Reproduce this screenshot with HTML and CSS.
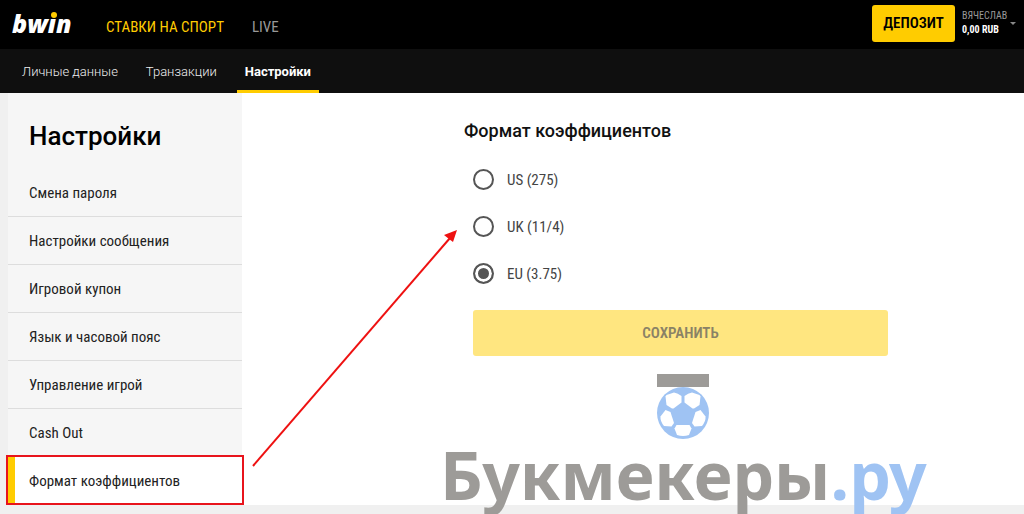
FILE: index.html
```html
<!DOCTYPE html>
<html lang="ru">
<head>
    <meta charset="UTF-8">
    <meta name="viewport" content="width=device-width, initial-scale=1.0">
    <title>Настройки</title>
    <link rel="stylesheet" href="styles.css">
</head>
<body>
    <header class="topbar">
        <a href="#" class="logo" aria-label="bwin">bw<span class="logo-i">ı</span>n</a>
        <nav class="main-nav">
            <a href="#" class="active">СТАВКИ НА СПОРТ</a>
            <a href="#">LIVE</a>
        </nav>
        <button type="button" class="deposit">ДЕПОЗИТ</button>
        <button type="button" class="account">
            <span class="account-text">
                <span class="account-name">ВЯЧЕСЛАВ</span>
                <span class="account-balance">0,00 RUB</span>
            </span>
            <span class="caret"></span>
        </button>
    </header>

    <nav class="subnav">
        <a href="#">Личные данные</a>
        <a href="#">Транзакции</a>
        <a href="#" class="active">Настройки</a>
    </nav>

    <div class="page">
        <aside class="sidebar">
            <h1>Настройки</h1>
            <ul class="menu">
                <li><a href="#">Смена пароля</a></li>
                <li><a href="#">Настройки сообщения</a></li>
                <li><a href="#">Игровой купон</a></li>
                <li><a href="#">Язык и часовой пояс</a></li>
                <li><a href="#">Управление игрой</a></li>
                <li><a href="#">Cash Out</a></li>
                <li><a href="#" class="active">Формат коэффициентов</a></li>
            </ul>
        </aside>

        <main class="content">
            <form class="odds-form">
                <h2>Формат коэффициентов</h2>
                <label class="option"><input type="radio" name="odds" value="us">US (275)</label>
                <label class="option"><input type="radio" name="odds" value="uk">UK (11/4)</label>
                <label class="option"><input type="radio" name="odds" value="eu" checked>EU (3.75)</label>
                <button type="submit" class="save" disabled>СОХРАНИТЬ</button>
            </form>

            <svg class="arrow" width="206" height="238" viewBox="0 0 206 238" aria-hidden="true">
                <path d="M1 236 L198 8" stroke="#ee1111" stroke-width="2" fill="none"/>
                <path d="M205 0 L201 12 L197 9 L192 5 Z" fill="#ee1111"/>
            </svg>

            <div class="watermark">
                <svg width="54" height="66" viewBox="0 0 54 66" aria-hidden="true">
                    <rect x="1" y="0" width="52" height="13" fill="#9d9b98"/>
                    <circle cx="27" cy="39" r="26" fill="#9fc3f3"/>
                    <g fill="#ffffff">
                        <path d="M9.500 22.500 L10.500 21 L18 18.500 Q22 19 25.500 22 L25.500 28.500 L17.500 34.500 L16 34.500 L10.500 31 Z"/>
                        <path d="M44.500 22.500 L43.500 21 L36 18.500 Q32 19 28.500 22 L28.500 28.500 L36.500 34.500 L38 34.500 L43.500 31 Z"/>
                        <path d="M9.500 36 L14.500 38 L18 49 L15.500 52.500 L8 52 Q4 47 4.500 42.500 Z"/>
                        <path d="M44.500 36 L39.500 38 L36 49 L38.500 52.500 L46 52 Q50 47 49.500 42.500 Z"/>
                        <path d="M20.500 51 L33.500 51 L35.500 54.500 L33 61 Q27 63 21 61 L18.500 54.500 Z"/>
                    </g>
                </svg>
                <div class="watermark-text">Букмекеры<span>.ру</span></div>
            </div>
        </main>
    </div>
</body>
</html>
```
FILE: styles.css
```css
* {
    box-sizing: border-box;
}

body {
    min-height: 100vh;
    margin: 0;
    background-color: #f0f0f0;
    font-family: "Roboto Condensed", Roboto, sans-serif;
    color: #222;
}

a {
    color: inherit;
    text-decoration: none;
}

button {
    border: none;
    font-family: inherit;
    cursor: pointer;
}

.topbar {
    display: flex;
    align-items: center;
    height: 49px;
    padding: 0 8px 3px 12px;
    background-color: #000;
}

.logo {
    width: 94px;
    color: #fff;
    font-family: "Open Sans", sans-serif;
    font-size: 25px;
    font-weight: 800;
    font-style: italic;
    line-height: 32px;
}

.logo-i {
    position: relative;
}

.logo-i::after {
    content: "";
    position: absolute;
    top: 6px;
    left: 3px;
    width: 6px;
    height: 6px;
    border-radius: 50%;
    background-color: #ffcc00;
}

.main-nav {
    display: flex;
    flex: 1;
    gap: 28px;
    padding-top: 8px;
    color: #999;
    font-size: 15px;
}

.main-nav .active {
    color: #ffcc00;
}

.deposit {
    width: 83px;
    height: 37px;
    padding: 0;
    border-radius: 3px;
    background-color: #ffcc00;
    color: #000;
    font-size: 15px;
    font-weight: 600;
}

.account {
    display: flex;
    align-items: center;
    gap: 6px;
    margin-left: 7px;
    padding: 0;
    background: none;
    color: #999;
    text-align: left;
}

.account-text {
    width: 42px;
}

.account-text span {
    display: block;
    font-size: 10px;
    line-height: 14px;
    white-space: nowrap;
}

.account-text .account-balance {
    color: #fff;
    font-weight: 700;
}

.caret {
    border: 3px solid transparent;
    border-top-color: #888;
    border-bottom: 0;
}

.subnav {
    display: flex;
    gap: 12px;
    height: 44px;
    padding-left: 14px;
    background-color: #0f0f0f;
    color: #eee;
    font-family: Roboto, sans-serif;
    font-size: 13px;
    font-weight: 300;
    line-height: 45px;
}

.subnav a {
    padding: 0 8px;
}

.subnav .active {
    border-bottom: 3px solid #ffcc00;
    color: #fff;
    font-weight: 700;
}

.page {
    display: flex;
    padding: 0 0 9px 8px;
}

.sidebar {
    width: 234px;
    background-color: #f6f6f6;
}

h1 {
    margin: 0;
    padding: 27px 21px 17px;
    color: #000;
    font-family: Roboto, sans-serif;
    font-size: 26px;
    font-weight: 500;
    line-height: 32px;
}

.menu {
    margin: 0;
    padding: 0 0 2px;
    list-style: none;
}

.menu a {
    display: block;
    height: 48px;
    padding-left: 21px;
    border-bottom: 1px solid #ddd;
    font-size: 15px;
    line-height: 48px;
}

.menu li:nth-last-child(2) a {
    border-bottom-color: transparent;
}

.menu .active {
    position: relative;
    z-index: 1;
    height: 46px;
    padding-left: 14px;
    border-bottom: none;
    border-left: 7px solid #ffcc00;
    outline: 2px solid #e8141c;
    background-color: #fff;
}

.content {
    position: relative;
    flex: 1;
    background-color: #fff;
}

.odds-form {
    width: 424px;
    margin-left: 222px;
    padding-top: 26px;
}

h2 {
    margin: 0 0 13px;
    color: #111;
    font-family: Roboto, sans-serif;
    font-size: 18px;
    font-weight: 500;
    line-height: 24px;
}

.option {
    display: flex;
    align-items: center;
    gap: 13px;
    height: 47px;
    margin-left: 9px;
    color: #444;
    font-size: 15px;
}

.option input {
    appearance: none;
    width: 21px;
    height: 21px;
    margin: 0;
    border: 2px solid #555;
    border-radius: 50%;
    background-color: #fff;
}

.option input:checked {
    background-color: #555;
    box-shadow: inset 0 0 0 3px #fff;
}

.save {
    display: block;
    width: 415px;
    height: 46px;
    margin: 13px 0 0 9px;
    border-radius: 3px;
    background-color: #ffe680;
    color: #8a8266;
    font-size: 15px;
    font-weight: 600;
}

.arrow {
    position: absolute;
    top: 137px;
    left: 10px;
}

.watermark {
    position: absolute;
    top: 281px;
    left: 198px;
    pointer-events: none;
}

.watermark svg {
    display: block;
    margin: 0 auto;
    padding: 0;
}

.watermark-text {
    color: #9d9b98;
    font-family: "Noto Sans", sans-serif;
    font-size: 66px;
    font-weight: 700;
    line-height: 68px;
}

.watermark-text span {
    color: #9fc3f3;
}
```
